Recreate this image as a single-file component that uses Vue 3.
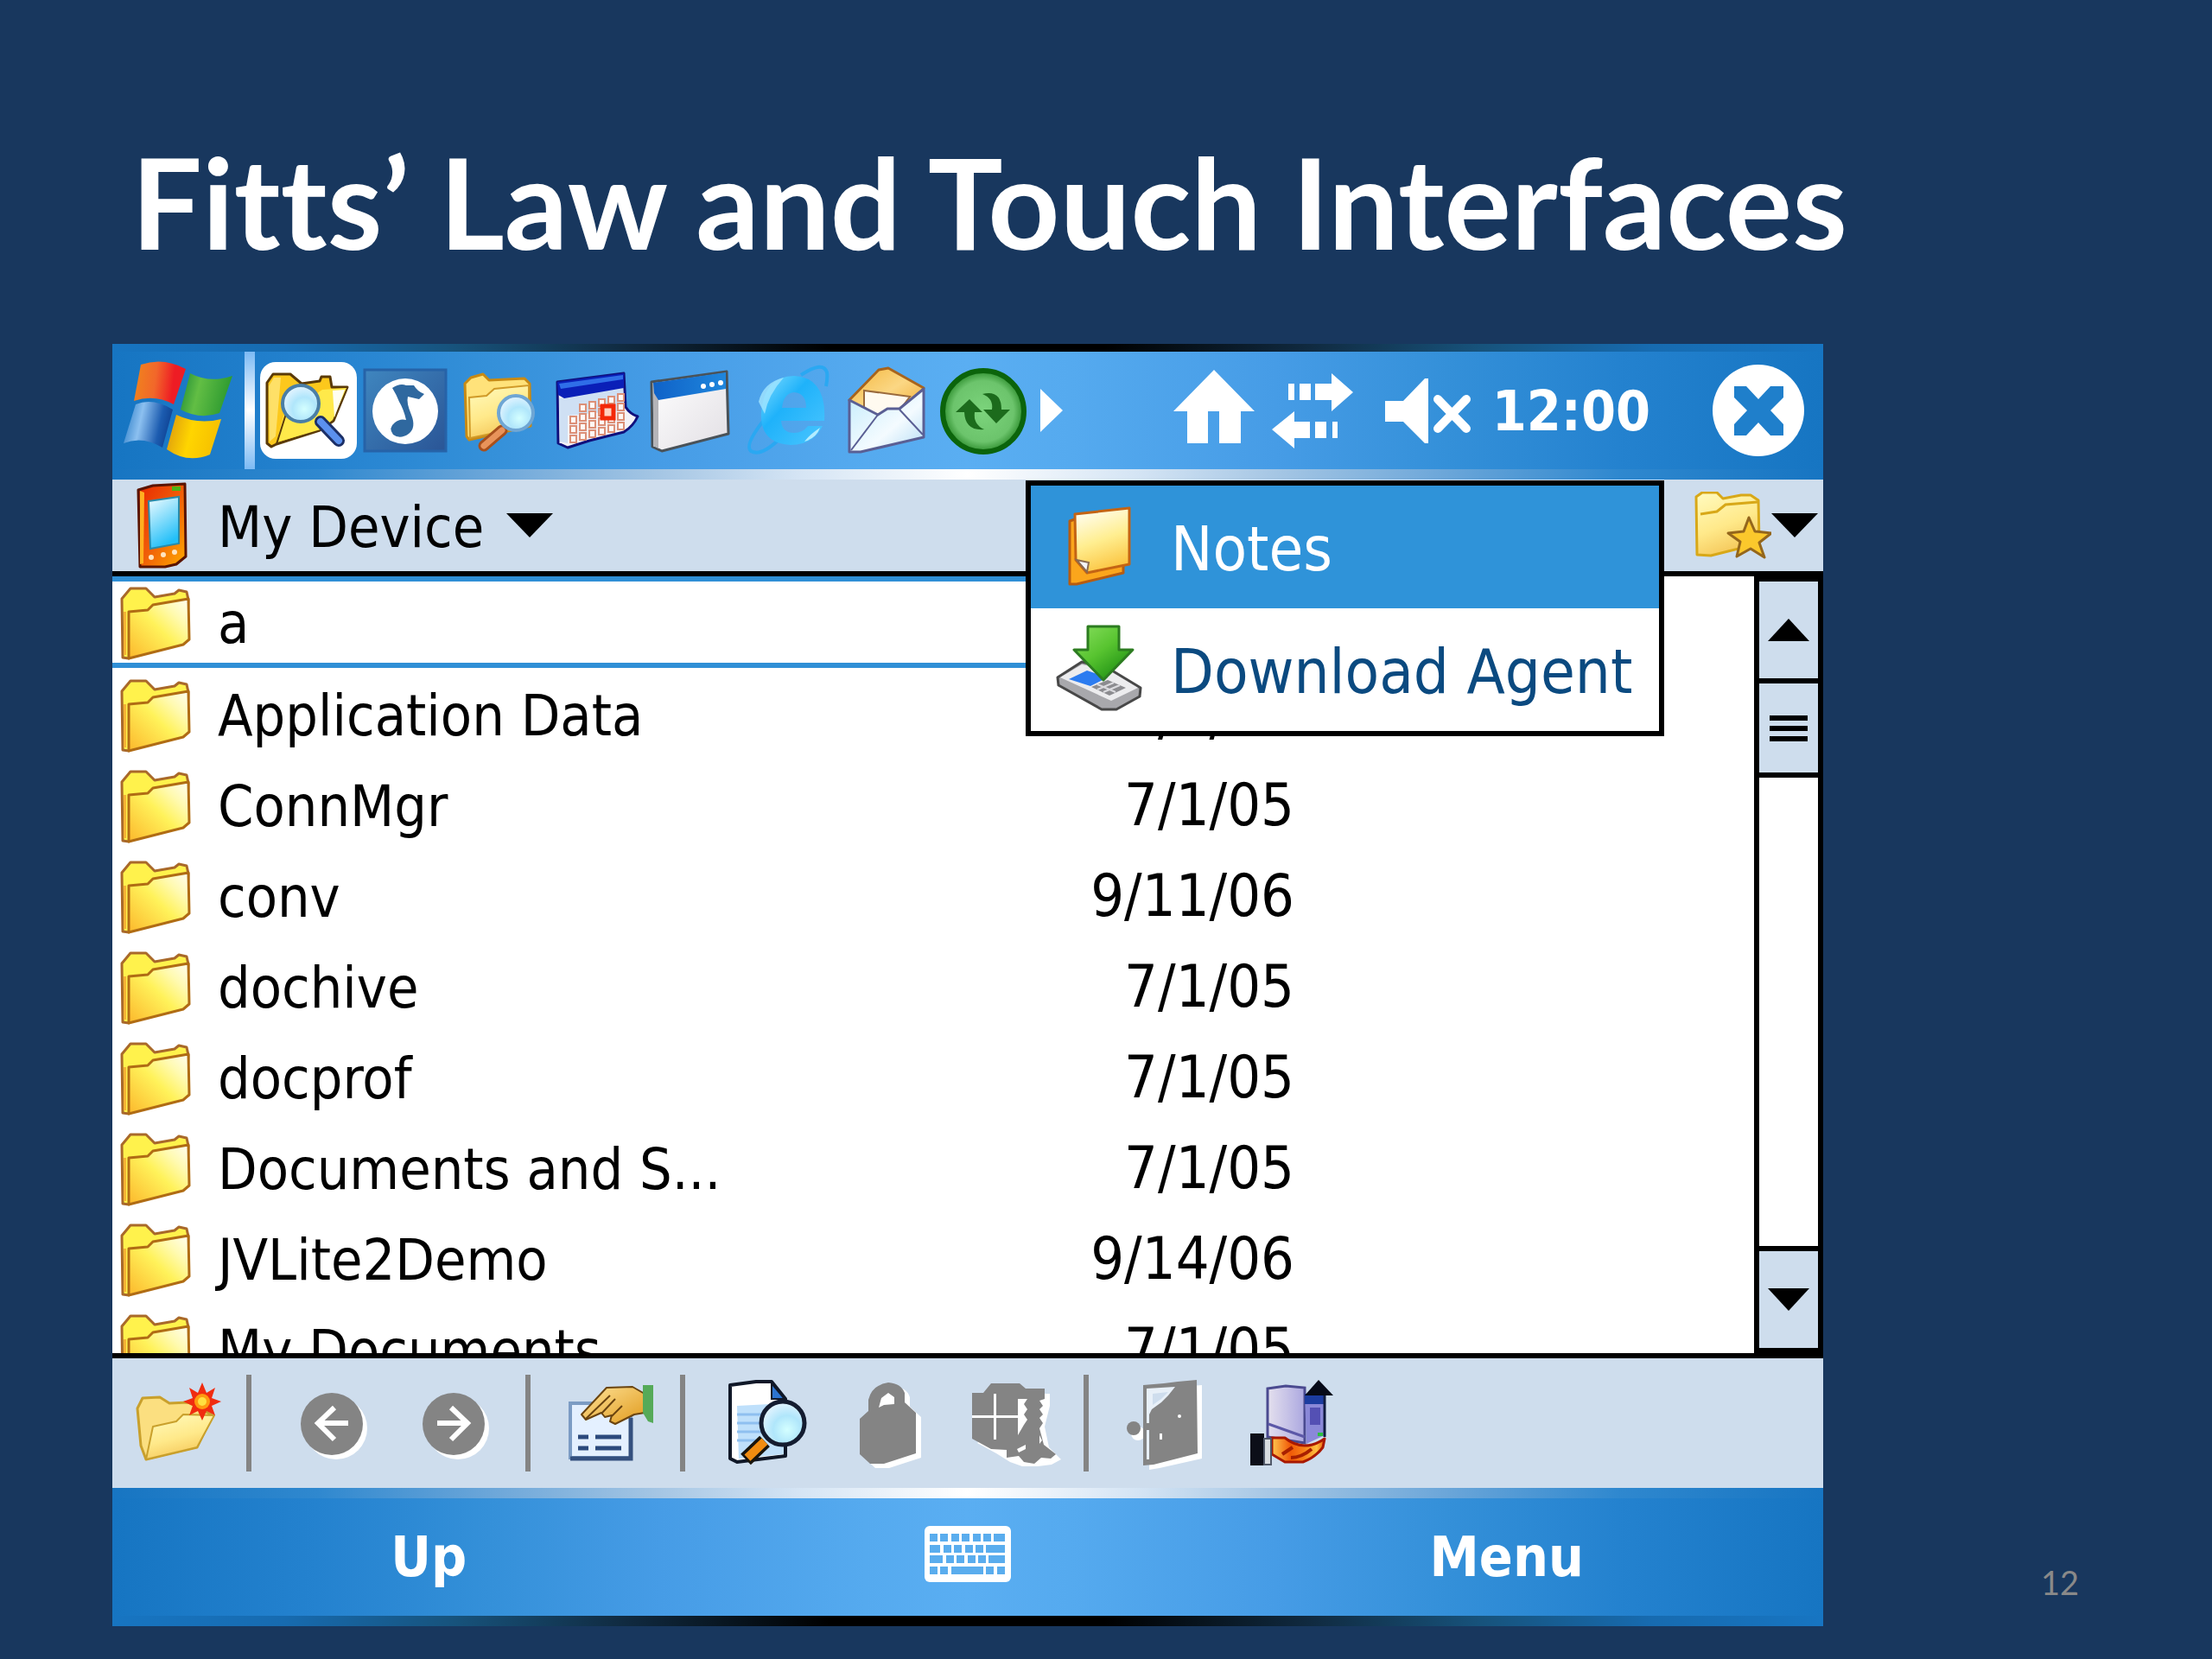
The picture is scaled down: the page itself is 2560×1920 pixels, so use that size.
<template>
  <main class="slide">
    <svg class="defs" aria-hidden="true">
      <defs>
        <linearGradient id="gFolder" x1="1" y1="0" x2="0" y2="1">
          <stop offset="0" stop-color="#fffdf4" />
          <stop offset="0.25" stop-color="#fffab0" />
          <stop offset="0.5" stop-color="#fff25a" />
          <stop offset="1" stop-color="#fcb82c" />
        </linearGradient>
        <linearGradient id="gPale" x1="0" y1="0" x2="0.4" y2="1">
          <stop offset="0" stop-color="#fffbc0" />
          <stop offset="0.6" stop-color="#ffe98a" />
          <stop offset="1" stop-color="#f5c95c" />
        </linearGradient>
        <linearGradient id="gRed" x1="0" y1="0" x2="1" y2="0.1">
          <stop offset="0" stop-color="#f0861c" />
          <stop offset="0.45" stop-color="#f2672a" />
          <stop offset="0.8" stop-color="#ee1c24" />
        </linearGradient>
        <linearGradient id="gGreen" x1="0" y1="0" x2="1" y2="0.2">
          <stop offset="0" stop-color="#1e8a35" />
          <stop offset="0.4" stop-color="#62be44" />
          <stop offset="1" stop-color="#2d9a30" />
        </linearGradient>
        <linearGradient id="gBlue" x1="0" y1="0.3" x2="1" y2="0.5">
          <stop offset="0" stop-color="#2d7fc8" />
          <stop offset="0.35" stop-color="#8cc0f0" />
          <stop offset="0.75" stop-color="#1c5cb0" />
          <stop offset="1" stop-color="#0d3f90" />
        </linearGradient>
        <linearGradient id="gYellow" x1="0" y1="0" x2="1" y2="0.2">
          <stop offset="0" stop-color="#d99410" />
          <stop offset="0.5" stop-color="#ffd500" />
          <stop offset="1" stop-color="#f6c000" />
        </linearGradient>
        <radialGradient id="gLens" cx="0.6" cy="0.65" r="0.65">
          <stop offset="0" stop-color="#d4ffff" />
          <stop offset="0.5" stop-color="#b0e6fb" />
          <stop offset="1" stop-color="#e4f4ff" />
        </radialGradient>
        <linearGradient id="gWhite" x1="0" y1="0" x2="1" y2="1">
          <stop offset="0" stop-color="#ffffff" />
          <stop offset="1" stop-color="#e2dfe4" />
        </linearGradient>
        <linearGradient id="gTitle" x1="0" y1="0" x2="1" y2="0">
          <stop offset="0" stop-color="#0f62c8" />
          <stop offset="1" stop-color="#1f86dc" />
        </linearGradient>
        <linearGradient id="gNavy" x1="0" y1="0" x2="1" y2="1">
          <stop offset="0" stop-color="#3f86bf" />
          <stop offset="1" stop-color="#2a5596" />
        </linearGradient>
        <linearGradient id="gIe" x1="0" y1="0" x2="1" y2="1">
          <stop offset="0" stop-color="#7fdcff" />
          <stop offset="0.4" stop-color="#1fb2fa" />
          <stop offset="1" stop-color="#4cc6ff" />
        </linearGradient>
        <linearGradient id="gMail" x1="0" y1="0" x2="1" y2="1">
          <stop offset="0" stop-color="#c4ecfc" />
          <stop offset="0.6" stop-color="#f4fbff" />
          <stop offset="1" stop-color="#b4dcf4" />
        </linearGradient>
        <linearGradient id="gFlap" x1="0" y1="0" x2="1" y2="1">
          <stop offset="0" stop-color="#f4b63c" />
          <stop offset="0.5" stop-color="#fbd784" />
          <stop offset="1" stop-color="#f0a82c" />
        </linearGradient>
        <radialGradient id="gSync">
          <stop offset="0" stop-color="#7cd47c" />
          <stop offset="0.75" stop-color="#6cc46c" />
          <stop offset="1" stop-color="#2f8f2f" />
        </radialGradient>
        <linearGradient id="gPda" x1="0" y1="0" x2="1" y2="1">
          <stop offset="0" stop-color="#e82800" />
          <stop offset="0.5" stop-color="#f05c08" />
          <stop offset="1" stop-color="#ffac00" />
        </linearGradient>
        <linearGradient id="gScreen" x1="0" y1="0" x2="0.4" y2="1">
          <stop offset="0" stop-color="#f4fdff" />
          <stop offset="1" stop-color="#22bff8" />
        </linearGradient>
        <linearGradient id="gNote" x1="0.3" y1="0" x2="0.6" y2="1">
          <stop offset="0" stop-color="#fffdf0" />
          <stop offset="0.5" stop-color="#ffee90" />
          <stop offset="1" stop-color="#fbc23c" />
        </linearGradient>
        <linearGradient id="gArrow" x1="0" y1="0" x2="0.8" y2="1">
          <stop offset="0" stop-color="#8ae060" />
          <stop offset="0.5" stop-color="#58c430" />
          <stop offset="1" stop-color="#188a10" />
        </linearGradient>
        <linearGradient id="gHand" x1="0" y1="0" x2="1" y2="1">
          <stop offset="0" stop-color="#ffe49a" />
          <stop offset="1" stop-color="#e09a1c" />
        </linearGradient>
        <linearGradient id="gFire" x1="0" y1="0" x2="1" y2="0">
          <stop offset="0" stop-color="#ffc850" />
          <stop offset="0.35" stop-color="#f05a08" />
          <stop offset="0.6" stop-color="#f88018" />
          <stop offset="0.85" stop-color="#ffc040" />
          <stop offset="1" stop-color="#e85808" />
        </linearGradient>
        <linearGradient id="gBox" x1="0" y1="0" x2="1" y2="0">
          <stop offset="0" stop-color="#e4e0ee" />
          <stop offset="1" stop-color="#aca8e0" />
        </linearGradient>
      </defs>
    </svg>

    <h1 class="slide-title">Fitts’ Law and Touch Interfaces</h1>

    <div class="slide-body">
      <section class="device">
        <div class="edge-dark top"></div>
        <header class="taskbar">
          <button class="start" aria-label="Start">
            <svg width="128" height="114" viewBox="0 0 128 114">
              <path d="M20 4Q46-5 72 9L58 50Q36 38 12 46Z" fill="url(#gRed)" />
              <path d="M77 14Q100 26 126 17L111 60Q88 68 66 56Z" fill="url(#gGreen)" />
              <path d="M14 50Q34 42 57 56L45 100Q22 86 0 95Z" fill="url(#gBlue)" />
              <path d="M61 62Q86 74 113 67L100 108Q74 119 50 102Z" fill="url(#gYellow)" />
            </svg>
          </button>
          <span class="start-rule"></span>

          <nav class="programs">
            <button class="slot active" aria-label="File Explorer">
              <svg viewBox="0 0 112 112">
                <path d="M8 24L15 14H35L48 25L69 22L71 17H81L83 29L101 29L85 68L69 79L19 95L13 98L8 94Z" fill="#fcc81c" stroke="#5a3a08" stroke-width="3" stroke-linejoin="round" />
                <path d="M19 93L27 62L72 32L100 30L84 67L70 78Z" fill="#ffe94a" />
                <path d="M84 33L98 32L86 64Z" fill="#fffef0" />
                <path d="M19 95L30 60" fill="none" stroke="#5a3a08" stroke-width="2" />
                <path d="M10 28L16 18H24L18 86L11 92Z" fill="#fff09a" opacity=".6" />
                <path d="M70 69L91 91" stroke="#1c2f66" stroke-width="14" stroke-linecap="round" />
                <path d="M70 69L91 91" stroke="#5b90ee" stroke-width="8" stroke-linecap="round" />
                <circle cx="47" cy="48" r="21" fill="url(#gLens)" stroke="#4a7ea6" stroke-width="4" />
              </svg>
            </button>
            <button class="slot" aria-label="Music">
              <svg viewBox="0 0 112 112">
                <rect x="9" y="9" width="94" height="94" fill="url(#gNavy)" stroke="#2663a8" stroke-width="3" />
                <circle cx="56" cy="57" r="38" fill="#fff" />
                <path d="M41 30Q50 24 57 27L66 27Q70 34 78 37L72 43L59 40Q57 47 63 61Q69 76 60 83Q50 90 42 84Q36 76 44 70Q50 65 57 67Q54 54 49 46Q46 38 41 30Z" fill="#2f689f" />
              </svg>
            </button>
            <button class="slot" aria-label="Search">
              <svg viewBox="0 0 112 112">
                <path d="M13 25L20 18L34 14L41 21L82 19L88 25L89 74L18 90L15 86Z" fill="#ffe27a" stroke="#c88a14" stroke-width="3" stroke-linejoin="round" />
                <path d="M18 41L38 39L47 31L87 27V74L19 88Z" fill="url(#gPale)" stroke="#d09a28" stroke-width="2" />
                <path d="M56 79L35 97" stroke="#a8501c" stroke-width="13" stroke-linecap="round" />
                <path d="M56 79L35 97" stroke="#e8935a" stroke-width="7" stroke-linecap="round" />
                <circle cx="72" cy="59" r="20" fill="url(#gLens)" stroke="#6fa6d4" stroke-width="4" />
              </svg>
            </button>
            <button class="slot" aria-label="Calendar">
              <svg viewBox="0 0 112 112">
                <path d="M8 23L85 13L87 52Q92 60 101 63Q96 74 85 81L45 91L20 99L9 94Z" fill="#f4f2f6" stroke="#10107c" stroke-width="3" stroke-linejoin="round" />
                <path d="M10 42L84 30V56L20 62V94L11 92Z" fill="#cfe0f4" />
                <path d="M8 23L85 13V30L16 42L9 38Z" fill="#0a1fb8" />
                <path d="M10 25L84 15V20L12 31Z" fill="#2f6ee8" />
                <rect v-for="cell in calendarCells" :key="cell.id" :x="cell.x" :y="cell.y" width="7" height="8" fill="#fff8f4" stroke="#dc9078" stroke-width="2" />
                <rect x="60" y="51" width="13" height="14" fill="#ffd0c0" stroke="#f42808" stroke-width="5" />
              </svg>
            </button>
            <button class="slot" aria-label="Window">
              <svg viewBox="0 0 112 112">
                <path d="M5 23L92 11L94 83L17 103L6 98Z" fill="url(#gWhite)" stroke="#4a5258" stroke-width="3" stroke-linejoin="round" />
                <path d="M7 24L13 27V100L7 97Z" fill="#b4b4b8" />
                <path d="M7 24L91 12V31L13 44L8 36Z" fill="url(#gTitle)" />
                <circle cx="65" cy="28" r="3" fill="#fff" />
                <circle cx="75" cy="26" r="3" fill="#fff" />
                <circle cx="85" cy="24" r="3" fill="#fff" />
              </svg>
            </button>
            <button class="slot" aria-label="Internet Explorer">
              <svg viewBox="0 0 112 112">
                <path d="M66 15Q92-2 96 12Q97 18 95 28M24 66Q0 96 8 103Q20 110 42 88" fill="none" stroke="#2aa8f2" stroke-width="4" />
                <path d="M93 68H43Q44 82 58 82Q68 82 74 74H91Q80 96 54 96Q18 94 20 58Q24 16 58 16Q96 18 93 68ZM44 53H72Q72 36 58 35Q46 36 44 53Z" fill="url(#gIe)" />
                <path d="M17 46Q22 24 46 18Q28 38 24 60Z" fill="#a4e6ff" opacity=".8" />
                <path d="M70 92Q84 88 88 76Q76 84 70 92Z" fill="#b4ecff" />
              </svg>
            </button>
            <button class="slot" aria-label="Messaging">
              <svg viewBox="0 0 112 112">
                <path d="M10 44L44 9L55 7L96 30L80 60L30 64Z" fill="url(#gFlap)" stroke="#a8641c" stroke-width="3" stroke-linejoin="round" />
                <path d="M27 33L80 40L68 56L44 64L27 52Z" fill="#fffaf0" stroke="#9a6a3c" stroke-width="2" />
                <path d="M10 44L43 61L54 54H68L96 31V87L23 104H10Z" fill="url(#gMail)" stroke="#5a5f94" stroke-width="3" stroke-linejoin="round" />
                <path d="M43 61L12 102M68 55L95 84" fill="none" stroke="#5a5f94" stroke-width="2" />
              </svg>
            </button>
            <button class="slot" aria-label="ActiveSync">
              <svg viewBox="0 0 112 112">
                <circle cx="53" cy="57" r="47" fill="url(#gSync)" stroke="#0b640b" stroke-width="6" />
                <path d="M37 43L52 58H43Q41 72 54 78Q32 80 31 58H21Z" fill="#1c6b1c" />
                <path d="M68 71L53 55H63Q65 42 52 37Q74 32 74 55H84Z" fill="#1c6b1c" />
              </svg>
            </button>
          </nav>
          <button class="more" aria-label="More programs">
            <svg width="28" height="52" viewBox="0 0 28 52"><path d="M1 1L27 26L1 51Z" fill="#fff" /></svg>
          </button>

          <div class="status">
            <svg class="slot" viewBox="0 0 112 112">
              <path d="M9 57L56 9L103 57H87V94H62V57H49V94H25V57Z" fill="#fff" />
            </svg>
            <svg class="slot" viewBox="0 0 112 112">
              <path d="M30 25h7v19h-7zM43 25h13v19H43zM61 25H80V13L105 35L80 57V44H61z" fill="#fff" />
              <path d="M81 69h6v19h-6zM61 69h13v19H61zM55 69H37V57L11 78L37 100V88H55z" fill="#fff" />
            </svg>
            <svg class="slot sound" viewBox="0 0 112 112">
              <path d="M10 45H31L56 19H60V94H56L31 69H10Z" fill="#fff" />
              <path d="M71 43L104 77M104 43L71 77" stroke="#fff" stroke-width="10" stroke-linecap="round" />
            </svg>
            <time class="clock">12:00</time>
          </div>
          <button class="close" aria-label="Close">
            <svg width="106" height="106" viewBox="0 0 106 106">
              <circle cx="53" cy="53" r="53" fill="#fff" />
              <path d="M25 25H39L53 40L67 25H82V38L67 53L82 69V82H67L53 67L39 82H25V69L40 53L25 38Z" fill="#1f7fcb" />
            </svg>
          </button>
        </header>
        <div class="edge-light"></div>

        <div class="address">
          <button class="location">
            <svg width="60" height="100" viewBox="0 0 60 100">
              <path d="M2 9L19 4L56 2L57 86L46 95L33 98H4Z" fill="url(#gPda)" stroke="#5a1400" stroke-width="3" stroke-linejoin="round" />
              <path d="M4 10L9 12L8 94L4 95Z" fill="#ffb020" />
              <path d="M14 22L49 17V71L16 77Z" fill="url(#gScreen)" stroke="#2a8aa8" stroke-width="2" />
              <rect x="41" y="5" width="10" height="5" fill="#4cb414" />
              <circle cx="17" cy="87" r="3" fill="#ffe4c0" />
              <circle cx="31" cy="84" r="3" fill="#ffe4c0" />
              <circle cx="44" cy="81" r="3" fill="#ffe4c0" />
            </svg>
            <span>My Device</span>
            <svg width="54" height="28" viewBox="0 0 54 28"><path d="M0 0H54L27 28Z" /></svg>
          </button>
          <button class="favorites" aria-label="Favorites">
            <svg width="92" height="78" viewBox="0 0 92 78">
              <path d="M5 6L12 1H29L36 8L57 4H68L77 10L78 60L22 74L6 73Z" fill="url(#gPale)" stroke="#d8a818" stroke-width="3" stroke-linejoin="round" />
              <path d="M10 26L29 23L39 15L76 12" fill="none" stroke="#d8a818" stroke-width="3" />
              <path d="M66 30L73 46L92 48L78 59L84 76L68 66L52 75L56 58L42 48L60 46Z" fill="#fbc82c" stroke="#94661c" stroke-width="3" stroke-linejoin="round" />
            </svg>
            <svg width="54" height="28" viewBox="0 0 54 28"><path d="M0 0H54L27 28Z" /></svg>
          </button>
        </div>

        <div class="content">
          <div class="files">
            <table>
              <colgroup>
                <col />
                <col class="col-date" />
                <col class="col-size" />
              </colgroup>
              <tbody>
                <tr v-for="file in files" :key="file.name" :class="{ selected: file.name === selected }">
                  <td>
                    <div class="name">
                      <svg width="82" height="88" viewBox="0 0 82 88">
                        <path d="M2 15L12 3H30L40 13L63 9L68 5L77 7L79 16L78 40L10 84L3 83Z" fill="#fff24c" stroke="#a9692a" stroke-width="3" stroke-linejoin="round" />
                        <path d="M10 30L32 28L38 22L79 15L80 62L73 68L10 84Z" fill="url(#gFolder)" stroke="#b06c14" stroke-width="3" stroke-linejoin="round" />
                        <path d="M4 30L7 30V80L4 80Z" fill="#f4b234" />
                      </svg>
                      <span>{{ file.name }}</span>
                    </div>
                  </td>
                  <td class="date">{{ file.date }}</td>
                  <td class="rest"></td>
                </tr>
              </tbody>
            </table>
          </div>
          <div class="scrollbar">
            <button class="arrow" aria-label="Scroll up">
              <svg width="48" height="26" viewBox="0 0 48 26"><path d="M24 0L48 26H0Z" /></svg>
            </button>
            <div class="thumb"><i></i><i></i><i></i></div>
            <div class="track"></div>
            <button class="arrow" aria-label="Scroll down">
              <svg width="48" height="26" viewBox="0 0 48 26"><path d="M0 0H48L24 26Z" /></svg>
            </button>
          </div>
        </div>

        <div class="toolbar">
          <button class="slot" aria-label="New folder">
            <svg viewBox="0 0 112 112">
              <path d="M9 39L15 27L35 26L46 33L68 32L96 47L78 84L19 98L13 82Z" fill="#fbdf80" stroke="#c9a02c" stroke-width="3" stroke-linejoin="round" />
              <path d="M19 98L27 60L54 54L62 46L98 47L78 84Z" fill="url(#gPale)" stroke="#c9a02c" stroke-width="2" stroke-linejoin="round" />
              <path d="M84 9L89 21L99 15L95 27L106 31L95 36L99 47L89 42L84 53L79 42L69 47L73 36L62 31L73 27L69 15L79 21Z" fill="#f02c10" />
              <circle cx="84" cy="31" r="9" fill="#ff9a10" />
              <circle cx="84" cy="31" r="5" fill="#ffe040" />
            </svg>
          </button>
          <span class="rule"></span>
          <button class="slot" aria-label="Back" disabled>
            <svg viewBox="0 0 112 112">
              <circle cx="60" cy="62" r="36" fill="#fff" />
              <circle cx="55" cy="57" r="36" fill="#848484" />
              <path d="M74 56H39M58 38L39 56L58 75" fill="none" stroke="#fff" stroke-width="6" />
            </svg>
          </button>
          <button class="slot" aria-label="Forward" disabled>
            <svg viewBox="0 0 112 112">
              <circle cx="57" cy="62" r="36" fill="#fff" />
              <circle cx="52" cy="57" r="36" fill="#848484" />
              <path d="M33 56H68M49 38L68 56L49 75" fill="none" stroke="#fff" stroke-width="6" />
            </svg>
          </button>
          <span class="rule"></span>
          <button class="slot" aria-label="Properties">
            <svg viewBox="0 0 112 112">
              <rect x="8" y="33" width="70" height="63" fill="#e4f0ff" stroke="#7c9cc4" stroke-width="4" />
              <path d="M8 97H78V50" fill="none" stroke="#34507e" stroke-width="5" />
              <path d="M17 72H29M37 72H67M17 85H29M37 85H67" stroke="#2c4a7c" stroke-width="5" />
              <path d="M50 15L80 14L94 22V44L82 46L60 57L54 54L56 47L48 49L44 44L26 52L21 46Z" fill="url(#gHand)" stroke="#6a4410" stroke-width="2" stroke-linejoin="round" />
              <path d="M26 51L54 24M44 45L60 28M56 48L68 36" stroke="#6a4410" stroke-width="2" />
              <path d="M92 12H104V56L98 54L92 44Z" fill="#55aa58" />
            </svg>
          </button>
          <span class="rule"></span>
          <button class="slot" aria-label="Find">
            <svg viewBox="0 0 112 112">
              <path d="M14 12L44 8H62L78 28V94L22 101L14 97Z" fill="#fff" stroke="#101828" stroke-width="4" stroke-linejoin="round" />
              <path d="M22 36L60 34L76 44V92L24 97Z" fill="#bfe0fb" />
              <path d="M22 46H56M22 56H52M22 66H52M22 76H48" stroke="#8fc0f0" stroke-width="3" />
              <path d="M62 10V28H77Z" fill="#2c74d0" stroke="#101828" stroke-width="2" />
              <path d="M54 77L32 98" stroke="#18140c" stroke-width="17" />
              <path d="M54 77L34 96" stroke="#f08c10" stroke-width="10" />
              <circle cx="75" cy="56" r="25" fill="url(#gLens)" stroke="#141c30" stroke-width="5" />
            </svg>
          </button>
          <button class="slot" aria-label="Lock" disabled>
            <svg viewBox="0 0 112 112">
              <path d="M26 56L36 47V34Q38 18 59 14Q74 14 78 26V37L91 49V96L54 108H38L26 97Z" fill="#fff" />
              <path d="M20 51L30 42V29Q34 12 53 9Q68 10 72 21V32L85 44V91L48 103H32L20 92Z" fill="#848484" />
              <path d="M42 38L45 27L53 21L60 26V34L48 35Z" fill="#fff" />
            </svg>
          </button>
          <button class="slot" aria-label="Compress" disabled>
            <svg viewBox="0 0 112 112">
              <path d="M12 79L34 91L50 101L64 106H82L98 104L109 98L95 84L90 60L96 36V22H72Z" fill="#fff" />
              <path d="M6 21H19L28 10H61L68 16H90V28L84 30L88 36L84 40L88 46L84 50L88 56L84 62L89 81L103 92L97 97L86 96L78 103L66 101L60 94L46 96V87L28 86L6 74Z" fill="#848484" />
              <path d="M31 22h3v53h-3zM6 47H59v3H6zM59 28H70L66 34L70 40L66 46L70 52L66 58L59 70Z" fill="#fff" />
              <path d="M58 86L68 81V86L60 90ZM84 70L87 76L84 80Z" fill="#fff" />
            </svg>
          </button>
          <span class="rule"></span>
          <button class="slot" aria-label="Exit" disabled>
            <svg viewBox="0 0 112 112">
              <circle cx="19" cy="68" r="8" fill="#fff" />
              <path d="M32 17L93 12V97L44 108L32 110Z" fill="#fff" />
              <path d="M25 12L49 10L65 8L87 6L88 91L37 104L25 105Z" fill="#848484" />
              <path d="M29 16L62 14L54 24L46 32L35 40L32 46V98H29Z" fill="#e8f0f8" />
              <path d="M36 22L54 20L46 28L36 35Z" fill="#cedded" />
              <circle cx="14" cy="62" r="8" fill="#848484" />
              <circle cx="67" cy="48" r="2" fill="#fff" />
              <rect x="44" y="68" width="3" height="7" fill="#fff" />
              <rect x="27" y="56" width="5" height="8" fill="#848484" />
            </svg>
          </button>
          <button class="slot" aria-label="Send">
            <svg viewBox="0 0 112 112">
              <path d="M25 16L46 13L68 15V79L25 72Z" fill="url(#gBox)" stroke="#4a4a90" stroke-width="3" />
              <path d="M26 57L68 72" stroke="#5c58a8" stroke-width="3" />
              <path d="M68 22H91V70L70 80Z" fill="#8a88d8" />
              <path d="M68 22H91V34H68Z" fill="#1c3ca0" />
              <rect x="74" y="38" width="12" height="20" fill="#5450b4" />
              <rect x="83" y="67" width="6" height="4" fill="#2cc040" />
              <path d="M91 22V72" stroke="#101c40" stroke-width="3" />
              <path d="M84 6L101 24H68Z" fill="#060a18" />
              <path d="M30 73H45Q56 82 68 82Q80 82 91 74L89 84Q80 96 66 101H45L30 92Z" fill="url(#gFire)" stroke="#a81800" stroke-width="3" stroke-linejoin="round" />
              <path d="M42 92L54 84M52 96Q64 96 76 86" fill="none" stroke="#a82000" stroke-width="4" />
              <rect x="5" y="68" width="16" height="37" fill="#0c0e18" />
              <rect x="21" y="74" width="8" height="30" fill="#d8dce0" stroke="#505868" stroke-width="2" />
            </svg>
          </button>
        </div>

        <div class="edge-light"></div>
        <footer class="softkeys">
          <button>Up</button>
          <button aria-label="Keyboard">
            <svg width="100" height="72" viewBox="0 0 100 72">
              <rect width="100" height="65" rx="6" fill="#fff" />
              <rect v-for="k in keyboardKeys" :key="k.id" :x="k.x" :y="k.y" :width="k.w" height="9" fill="#5aadee" />
            </svg>
          </button>
          <button>Menu</button>
        </footer>
        <div class="edge-dark bottom"></div>

        <div class="menu" role="menu">
          <button class="menu-item current" role="menuitem">
            <svg viewBox="0 0 104 104">
              <path d="M18 22L30 18L80 50V82L26 95H18Z" fill="#fba61c" stroke="#b85c10" stroke-width="3" stroke-linejoin="round" />
              <path d="M24 14L87 7V72L38 82L25 67Z" fill="url(#gNote)" stroke="#c46414" stroke-width="3" stroke-linejoin="round" />
              <path d="M26 67L40 70L38 81Z" fill="#f4f4fa" stroke="#8a6a50" stroke-width="2" />
            </svg>
            <span>Notes</span>
          </button>
          <button class="menu-item" role="menuitem">
            <svg viewBox="0 0 104 104">
              <path d="M4 61L32 43L62 50L100 73L99 83L72 98H55L5 70Z" fill="#a8a8ac" stroke="#484848" stroke-width="3" stroke-linejoin="round" />
              <path d="M7 61L32 46L62 52L97 73L66 88Z" fill="#ececee" />
              <path d="M17 63L38 53L62 61L42 71Z" fill="#2c7cf0" />
              <path d="M43 72L62 64L83 73L64 82Z" fill="#8c8c90" />
              <path d="M50 75L69 67M57 78L76 70M50 69L71 78" stroke="#dcdce0" stroke-width="2" />
              <path d="M39 2H75V29H91L57 64L23 29H39Z" fill="url(#gArrow)" stroke="#2c7c20" stroke-width="3" stroke-linejoin="round" />
            </svg>
            <span>Download Agent</span>
          </button>
        </div>
      </section>

      <aside class="side">
        <span class="page">12</span>
      </aside>
    </div>
  </main>
</template>

<script setup>
import { ref } from 'vue'

const selected = ref('a')

const files = [
  { name: 'a', date: '' },
  { name: 'Application Data', date: '7/1/05' },
  { name: 'ConnMgr', date: '7/1/05' },
  { name: 'conv', date: '9/11/06' },
  { name: 'dochive', date: '7/1/05' },
  { name: 'docprof', date: '7/1/05' },
  { name: 'Documents and S...', date: '7/1/05' },
  { name: 'JVLite2Demo', date: '9/14/06' },
  { name: 'My Documents', date: '7/1/05' }
]

// [x, width] of each key, row by row
const keyRows = [
  [[6, 9], [18, 9], [31, 9], [43, 9], [56, 9], [68, 9], [80, 13]],
  [[6, 12], [22, 9], [34, 9], [47, 9], [59, 9], [71, 22]],
  [[6, 15], [25, 9], [37, 9], [50, 9], [62, 9], [74, 19]],
  [[6, 9], [18, 9], [31, 37], [71, 9], [84, 9]]
]
const keyboardKeys = keyRows.flatMap((row, r) =>
  row.map(([x, w], i) => ({ id: `${r}-${i}`, x, w, y: [9, 22, 34, 47][r] }))
)

// days slope upwards to the right, the first row starts one column later
const calendarCells = []
for (let r = 0; r < 4; r++) {
  for (let c = 0; c < 6; c++) {
    if (r === 0 && c < 1) continue
    calendarCells.push({ id: `${r}-${c}`, x: 23 + c * 11, y: 52 + r * 11 - c * 3 })
  }
}
</script>

<style>
body {
  background: #18375e;
}
</style>

<style scoped>
.slide {
  display: flex;
  flex-direction: column;
  height: 100vh;
  box-sizing: border-box;
  padding: 0 0 38px 130px;
  background: #18375e;
  color: #000;
  font-family: "DejaVu Sans Condensed", "DejaVu Sans", sans-serif;
}

.defs {
  position: absolute;
  width: 0;
  height: 0;
}

.slide-title {
  margin: 0;
  padding: 149px 0 81px 22px;
  color: #fff;
  font: bold 145px/168px Lato, sans-serif;
  font-variant-ligatures: none;
  white-space: nowrap;
}

.slide-body {
  display: flex;
  flex: 1;
  min-height: 0;
}

.device {
  position: relative;
  display: flex;
  flex: 1;
  flex-direction: column;
  min-width: 0;
  background: #fff;
}

.side {
  display: flex;
  flex: 0 0 450px;
  align-items: flex-end;
  justify-content: flex-end;
  box-sizing: border-box;
  padding: 0 154px 27px 0;
}

.page {
  color: #898989;
  font: 38px/48px Lato, sans-serif;
}

button {
  margin: 0;
  padding: 0;
  border: 0;
  background: none;
  color: inherit;
  font: inherit;
}

svg {
  display: block;
}

.slot {
  flex: none;
  width: 112px;
  height: 112px;
}

.edge-dark {
  flex: none;
  background: linear-gradient(90deg, #1775c2, #176bb0 10%, #17537c 20%, #102a40 30%, #000 42%, #000 58%, #102a40 70%, #17537c 80%, #176bb0 90%, #1775c2);
}

.edge-dark.top {
  height: 9px;
}

.edge-dark.bottom {
  height: 12px;
}

.edge-light {
  flex: none;
  height: 12px;
  background: linear-gradient(90deg, #1775c2, #2f88cf 12%, #6ba6d9 22%, #a5c6e4 32%, #d4e4f4 40%, #fff 50%, #d4e4f4 60%, #a5c6e4 68%, #6ba6d9 78%, #2f88cf 88%, #1775c2);
}

.taskbar,
.softkeys {
  flex: none;
  height: 136px;
  background: linear-gradient(90deg, #1675c2, #2482cf 12%, #3490d9 22%, #469ce6 32%, #55aaef 44%, #5aaef2 50%, #55aaef 56%, #469ce6 68%, #3490d9 78%, #2482cf 88%, #1675c2);
  color: #fff;
}

.taskbar {
  display: flex;
  align-items: center;
  box-sizing: border-box;
  padding: 0 22px 0 13px;
}

.start-rule {
  align-self: stretch;
  width: 12px;
  margin: 0 6px 0 12px;
  background: linear-gradient(#7cbaf4, #fff 50%, #7cbaf4);
}

.programs {
  display: flex;
}

.active {
  border-radius: 18px;
  background: #fff;
}

.more {
  margin-left: 6px;
}

.status {
  display: flex;
  align-items: center;
  margin-left: auto;
}

.sound {
  margin-left: 20px;
}

.clock {
  margin: 0 72px 0 22px;
  padding-top: 2px;
  font-size: 64px;
  font-weight: bold;
  line-height: 76px;
}

.address {
  display: flex;
  flex: none;
  align-items: center;
  justify-content: space-between;
  height: 106px;
  padding: 0 6px 0 28px;
  border-bottom: 6px solid #000;
  background: #cedded;
  font-size: 66px;
}

.location,
.favorites {
  display: flex;
  align-items: center;
}

.location span {
  margin: 0 26px 0 34px;
  padding-top: 4px;
}

.content {
  display: flex;
  flex: 1;
  min-height: 0;
  border-bottom: 6px solid #000;
}

.files {
  flex: 1;
  overflow: hidden;
}

table {
  width: 100%;
  border-collapse: separate;
  border-spacing: 0;
  table-layout: fixed;
  font-size: 66px;
  line-height: 78px;
}

.col-date {
  width: 300px;
}

.col-size {
  width: 532px;
}

td {
  height: 105px;
  box-sizing: border-box;
  padding: 6px 0 0;
  white-space: nowrap;
}

.selected td:not(.rest) {
  height: 106px;
  border-top: 6px solid #2f8fd6;
  border-bottom: 6px solid #2f8fd6;
  padding: 4px 0 0;
}

.name {
  display: flex;
  align-items: center;
  gap: 31px;
  padding-left: 9px;
}

.date {
  padding-top: 2px;
  font-size: 68px;
  text-align: right;
}

.scrollbar {
  display: flex;
  flex: none;
  flex-direction: column;
  gap: 6px;
  width: 68px;
  padding: 6px;
  background: #000;
}

.arrow,
.thumb {
  display: flex;
  flex: none;
  align-items: center;
  justify-content: center;
  height: 112px;
  background: #cedded;
}

.thumb {
  flex-direction: column;
  gap: 6px;
  height: 103px;
}

.thumb i {
  width: 44px;
  height: 6px;
  background: #000;
}

.track {
  flex: 1;
  background: #fff;
}

.toolbar {
  display: flex;
  flex: none;
  align-items: center;
  gap: 32px;
  height: 150px;
  padding-left: 20px;
  background: #cedded;
}

.rule {
  width: 6px;
  height: 112px;
  margin: 0 6px 0 -9px;
  background: #848484;
}

.softkeys {
  display: grid;
  grid-template-columns: 37% 1fr 37%;
  align-items: center;
  justify-items: center;
  font-size: 64px;
  font-weight: bold;
}

.menu {
  position: absolute;
  top: 158px;
  right: 184px;
  display: flex;
  flex-direction: column;
  box-sizing: border-box;
  width: 739px;
  border: 6px solid #000;
  background: #fff;
  color: #0b4a80;
  font-size: 72px;
}

.menu-item {
  display: flex;
  align-items: center;
  gap: 31px;
  height: 142px;
  padding-left: 27px;
  white-space: nowrap;
}

.menu-item span {
  padding-top: 4px;
}

.menu-item svg {
  flex: none;
  width: 104px;
  height: 104px;
}

.current {
  background: #2f93d9;
  color: #fff;
}
</style>
